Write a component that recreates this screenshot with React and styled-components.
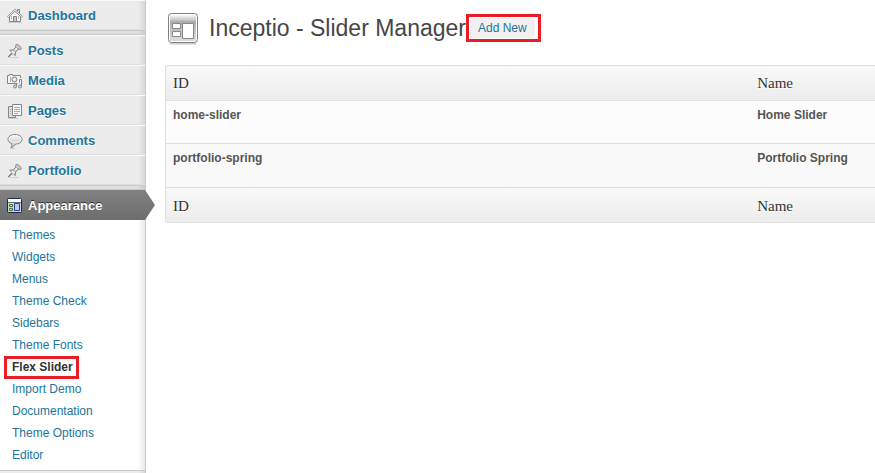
import React from "react";
import styled, { createGlobalStyle, css } from "styled-components";

const Global = createGlobalStyle`
  * { box-sizing: border-box; }
  body {
    margin: 0;
    background: #fff;
    color: #555;
    font: 12px/17px "Liberation Sans", Arial, sans-serif;
  }
`;

const Page = styled.div`
  display: flex;
  min-height: 100vh;
`;

const Sidebar = styled.nav`
  flex: none;
  display: flex;
  flex-direction: column;
  width: 146px;
  border-right: 1px solid #ccc;
`;

const edgeShade = "linear-gradient(to left, rgba(0,0,0,.09), rgba(0,0,0,0) 7px)";

const Separator = styled.div`
  height: 5px;
  border: solid #cacaca;
  border-width: 1px 0;
  background: ${edgeShade}, #dfdfdf;
`;

const MenuEnd = styled.div`
  flex: 1;
  min-height: 3px;
  border-top: 1px solid #cacaca;
  background: ${edgeShade}, #ececec;
`;

const MenuLink = styled.a`
  position: relative;
  display: flex;
  align-items: center;
  gap: 5px;
  height: 30px;
  padding: 2px 0 0 7px;
  border-top: 1px solid #f9f9f9;
  border-bottom: 1px solid #dfdfdf;
  background: ${edgeShade}, #ececec;
  color: #21759b;
  font-size: 13px;
  font-weight: bold;
  line-height: 18px;
  text-decoration: none;
  text-shadow: 0 1px 0 #fff;

  ${(p) =>
    p.$current &&
    css`
      border-color: #808080 transparent #6d6d6d;
      background: linear-gradient(#808080, #6d6d6d);
      color: #fff;
      text-shadow: 0 -1px 0 #333;

      &::after {
        content: "";
        position: absolute;
        left: 100%;
        top: -1px;
        width: 10px;
        height: 30px;
        background: linear-gradient(#808080, #6d6d6d);
        clip-path: polygon(0 0, 100% 50%, 0 100%);
      }
    `}
`;

const Submenu = styled.ul`
  margin: 0;
  padding: 4px 0 4px 12px;
  list-style: none;
  background: ${edgeShade}, #fff;
`;

const SubItem = styled.li`
  display: flex;
  align-items: center;
  height: 22px;
`;

const SubLink = styled.a`
  color: #21759b;
  text-decoration: none;

  ${(p) =>
    p.$current &&
    css`
      margin-left: -5px;
      padding: 0 3px 0 5px;
      outline: 3px solid #ed1c24;
      color: #333;
      font-weight: bold;
    `}
`;

const Main = styled.main`
  flex: 1;
  min-width: 0;
  padding: 10px 0 0 19px;
`;

const Heading = styled.header`
  display: flex;
  align-items: center;
  height: 36px;
`;

const Title = styled.h1`
  margin: 0 0 0 8px;
  color: #464646;
  font-size: 23px;
  font-weight: normal;
  line-height: 29px;
  white-space: nowrap;
`;

const Highlight = styled.span`
  display: flex;
  padding: 1px 3px 1px 1px;
  border: 3px solid #ed1c24;
`;

const AddButton = styled.button`
  height: 20px;
  padding: 0 8px;
  border: 0;
  border-radius: 3px;
  background: #f1f1f1;
  color: #21759b;
  font: 12px/20px "Liberation Sans", Arial, sans-serif;
  white-space: nowrap;
  cursor: pointer;
`;

const Table = styled.table`
  width: 100%;
  margin-top: 19px;
  border: 1px solid #dfdfdf;
  border-right: 0;
  border-radius: 3px 0 0 3px;
  border-spacing: 0;
  table-layout: fixed;
  overflow: hidden;
`;

const IdColumn = styled.col`
  width: 82.4%;
`;

const HeadCell = styled.th`
  height: ${(p) => (p.$foot ? 34 : 35)}px;
  padding: ${(p) => (p.$foot ? 2 : 0)}px 7px 0;
  border-bottom: ${(p) => (p.$foot ? 0 : 1)}px solid #dfdfdf;
  background: linear-gradient(#f9f9f9, #ececec);
  color: #333;
  font: normal 15px/20px "Liberation Serif", serif;
  text-align: left;
  text-shadow: 0 1px 0 #fff;
`;

const Cell = styled.td`
  height: ${(p) => (p.$alt ? 44 : 43)}px;
  padding: 6px 7px 5px;
  border-bottom: 1px solid #dfdfdf;
  background: ${(p) => (p.$alt ? "#f9f9f9" : "#fcfcfc")};
  color: #555;
  font-weight: bold;
  vertical-align: top;
`;

const MenuIcon = ({ children }) => (
  <svg width="16" height="16" viewBox="0 0 16 16" fill="none" stroke="#858585" aria-hidden="true">
    {children}
  </svg>
);

const HouseIcon = () => (
  <MenuIcon>
    <path d="M1 14.5h14" stroke="#ccc" />
    <path d="M10.5 3V1.5h2v3.5" fill="#ddd" />
    <path d="M2.5 8.5v5h11v-5L8 3z" fill="#f8f8f8" />
    <path d="M.5 8.5 8 1.2l7.5 7.3-1 1L8 3.3 1.5 9.5z" fill="#eee" strokeWidth=".8" />
    <path d="M6.5 13.5v-5h3v5z" fill="#ccc" />
    <path d="M4.500 8v3M11.500 8v3" stroke="#bbb" />
  </MenuIcon>
);

const PinIcon = () => (
  <MenuIcon>
    <path d="M2 14.500h10" stroke="#d2d2d2" />
    <path d="m1.300 14 4-4" stroke="#777" strokeWidth="1.300" />
    <path d="M2.800 7.200 6.300 6.800 9 4 8.500 2.200 10 1l4.500 4-1.200 1.500-2-.3L8.600 9l-.4 3.600z" fill="#ccc" />
    <path d="m8.300 6.800 2.500-2.600M4.800 8.300l2.400 2" stroke="#f8f8f8" strokeWidth="1.500" />
    <path d="M9.500 4.300 11.800 6" />
  </MenuIcon>
);

const MediaIcon = () => (
  <MenuIcon>
    <path d="M.5 2.500h2v-1h3v1h8v8H.5z" fill="#f5f5f5" />
    <path d="M3.500 4v5" stroke="#aaa" />
    <circle cx="7.500" cy="6.500" r="2.500" fill="#ddd" />
    <path d="M6.500 6.500h2" stroke="#fff" />
    <path d="M11.500 9.500v4M14.500 13.500v-7h-2" stroke="#ececec" strokeWidth="3" />
    <path d="M9.500 13.500v-3h1M14.500 13.500v-7h-2v3" />
    <circle cx="8" cy="13.500" r="1.500" fill="#ddd" />
    <circle cx="13" cy="13.500" r="1.500" fill="#ddd" />
  </MenuIcon>
);

const PagesIcon = () => (
  <MenuIcon>
    <path d="M1 15.500h10" stroke="#ccc" />
    <path d="M1.500 3.500h7v11h-7z" fill="#ddd" />
    <path d="M5.500 1.500h9v11h-9z" fill="#fafafa" />
    <path d="M7 4.500h6M7 6.500h6M7 8.500h6M7 10.500h4M3 6.500h1M3 8.500h1M3 10.500h1" stroke="#aaa" />
  </MenuIcon>
);

const CommentIcon = () => (
  <MenuIcon>
    <defs>
      <linearGradient id="bubble" x2="0" y2="1">
        <stop stopColor="#fafafa" />
        <stop offset="1" stopColor="#bbb" />
      </linearGradient>
    </defs>
    <path d="M3 15.500h5" stroke="#ccc" />
    <path
      d="M8 1.500c4 0 7 2 7 4.800S12.500 11 8.500 11C7.500 13 6 14.200 3.800 14.500c.9-1 1.100-2.500.8-4C2.300 9.700 1 8.200 1 6.300 1 3.500 4 1.500 8 1.500z"
      fill="url(#bubble)"
    />
    <path d="M8 2.700c3.300 0 5.800 1.500 5.800 3.600S11.500 9.800 8 9.800 2.200 8.400 2.200 6.300 4.700 2.700 8 2.700z" stroke="#f4f4f4" />
  </MenuIcon>
);

const AppearanceIcon = () => (
  <MenuIcon>
    <rect x=".5" y=".5" width="14" height="14" rx="1" fill="#b9dbe6" stroke="#20284a" />
    <path d="M1 2.500h13" stroke="#f8fafc" strokeWidth="3" />
    <path d="M1 4.500h13" stroke="#667386" />
    <path d="M2.500 6.500h3v2h-3zM2.500 10.500h3v2h-3z" fill="#d6ec87" stroke="#44752c" />
    <path d="M7.500 5.500h5v7h-5z" fill="#bfc6f4" stroke="#34408a" />
  </MenuIcon>
);

const ThemesIcon = () => (
  <svg width="36" height="34" viewBox="0 0 36 34" aria-hidden="true">
    <defs>
      <linearGradient id="titleBar" x2="0" y2="1">
        <stop stopColor="#fafafa" />
        <stop offset="1" stopColor="#bbb" />
      </linearGradient>
      <linearGradient id="windowBody" x2="0" y2="1">
        <stop stopColor="#aaa" />
        <stop offset="1" stopColor="#ddd" />
      </linearGradient>
    </defs>
    <path d="M5 32.500h26" stroke="#ccc" strokeWidth="2" />
    <rect x="3.500" y="2.500" width="29" height="29" rx="3" fill="#fff" stroke="#808080" />
    <path d="M5 4h26v6H5z" fill="url(#titleBar)" />
    <path d="M5 10h26v20H5z" fill="url(#windowBody)" />
    <g fill="#fff" stroke="#888">
      <path d="M7.500 12.500h8v5h-8zM7.500 20.500h8v5h-8zM17.500 12.500h11v15h-11z" />
    </g>
  </svg>
);

const sections = [
  ["Posts", PinIcon],
  ["Media", MediaIcon],
  ["Pages", PagesIcon],
  ["Comments", CommentIcon],
  ["Portfolio", PinIcon],
];

const appearanceItems = [
  "Themes",
  "Widgets",
  "Menus",
  "Theme Check",
  "Sidebars",
  "Theme Fonts",
  "Flex Slider",
  "Import Demo",
  "Documentation",
  "Theme Options",
  "Editor",
];

const sliders = [
  ["home-slider", "Home Slider"],
  ["portfolio-spring", "Portfolio Spring"],
];

export default function App() {
  return (
    <Page>
      <Global />
      <Sidebar>
        <MenuLink href="#dashboard">
          <HouseIcon />
          Dashboard
        </MenuLink>
        <Separator />
        {sections.map(([label, Icon]) => (
          <MenuLink key={label} href={`#${label.toLowerCase()}`}>
            <Icon />
            {label}
          </MenuLink>
        ))}
        <Separator />
        <MenuLink href="#appearance" $current>
          <AppearanceIcon />
          Appearance
        </MenuLink>
        <Submenu>
          {appearanceItems.map((label) => (
            <SubItem key={label}>
              <SubLink href="#appearance" $current={label === "Flex Slider"}>
                {label}
              </SubLink>
            </SubItem>
          ))}
        </Submenu>
        <MenuEnd />
      </Sidebar>
      <Main>
        <Heading>
          <ThemesIcon />
          <Title>Inceptio - Slider Manager</Title>
          <Highlight>
            <AddButton type="button">Add New</AddButton>
          </Highlight>
        </Heading>
        <Table>
          <colgroup>
            <IdColumn />
            <col />
          </colgroup>
          <thead>
            <tr>
              <HeadCell scope="col">ID</HeadCell>
              <HeadCell scope="col">Name</HeadCell>
            </tr>
          </thead>
          <tbody>
            {sliders.map(([id, name], i) => (
              <tr key={id}>
                <Cell $alt={i % 2 === 1}>{id}</Cell>
                <Cell $alt={i % 2 === 1}>{name}</Cell>
              </tr>
            ))}
          </tbody>
          <tfoot>
            <tr>
              <HeadCell scope="col" $foot>ID</HeadCell>
              <HeadCell scope="col" $foot>Name</HeadCell>
            </tr>
          </tfoot>
        </Table>
      </Main>
    </Page>
  );
}
